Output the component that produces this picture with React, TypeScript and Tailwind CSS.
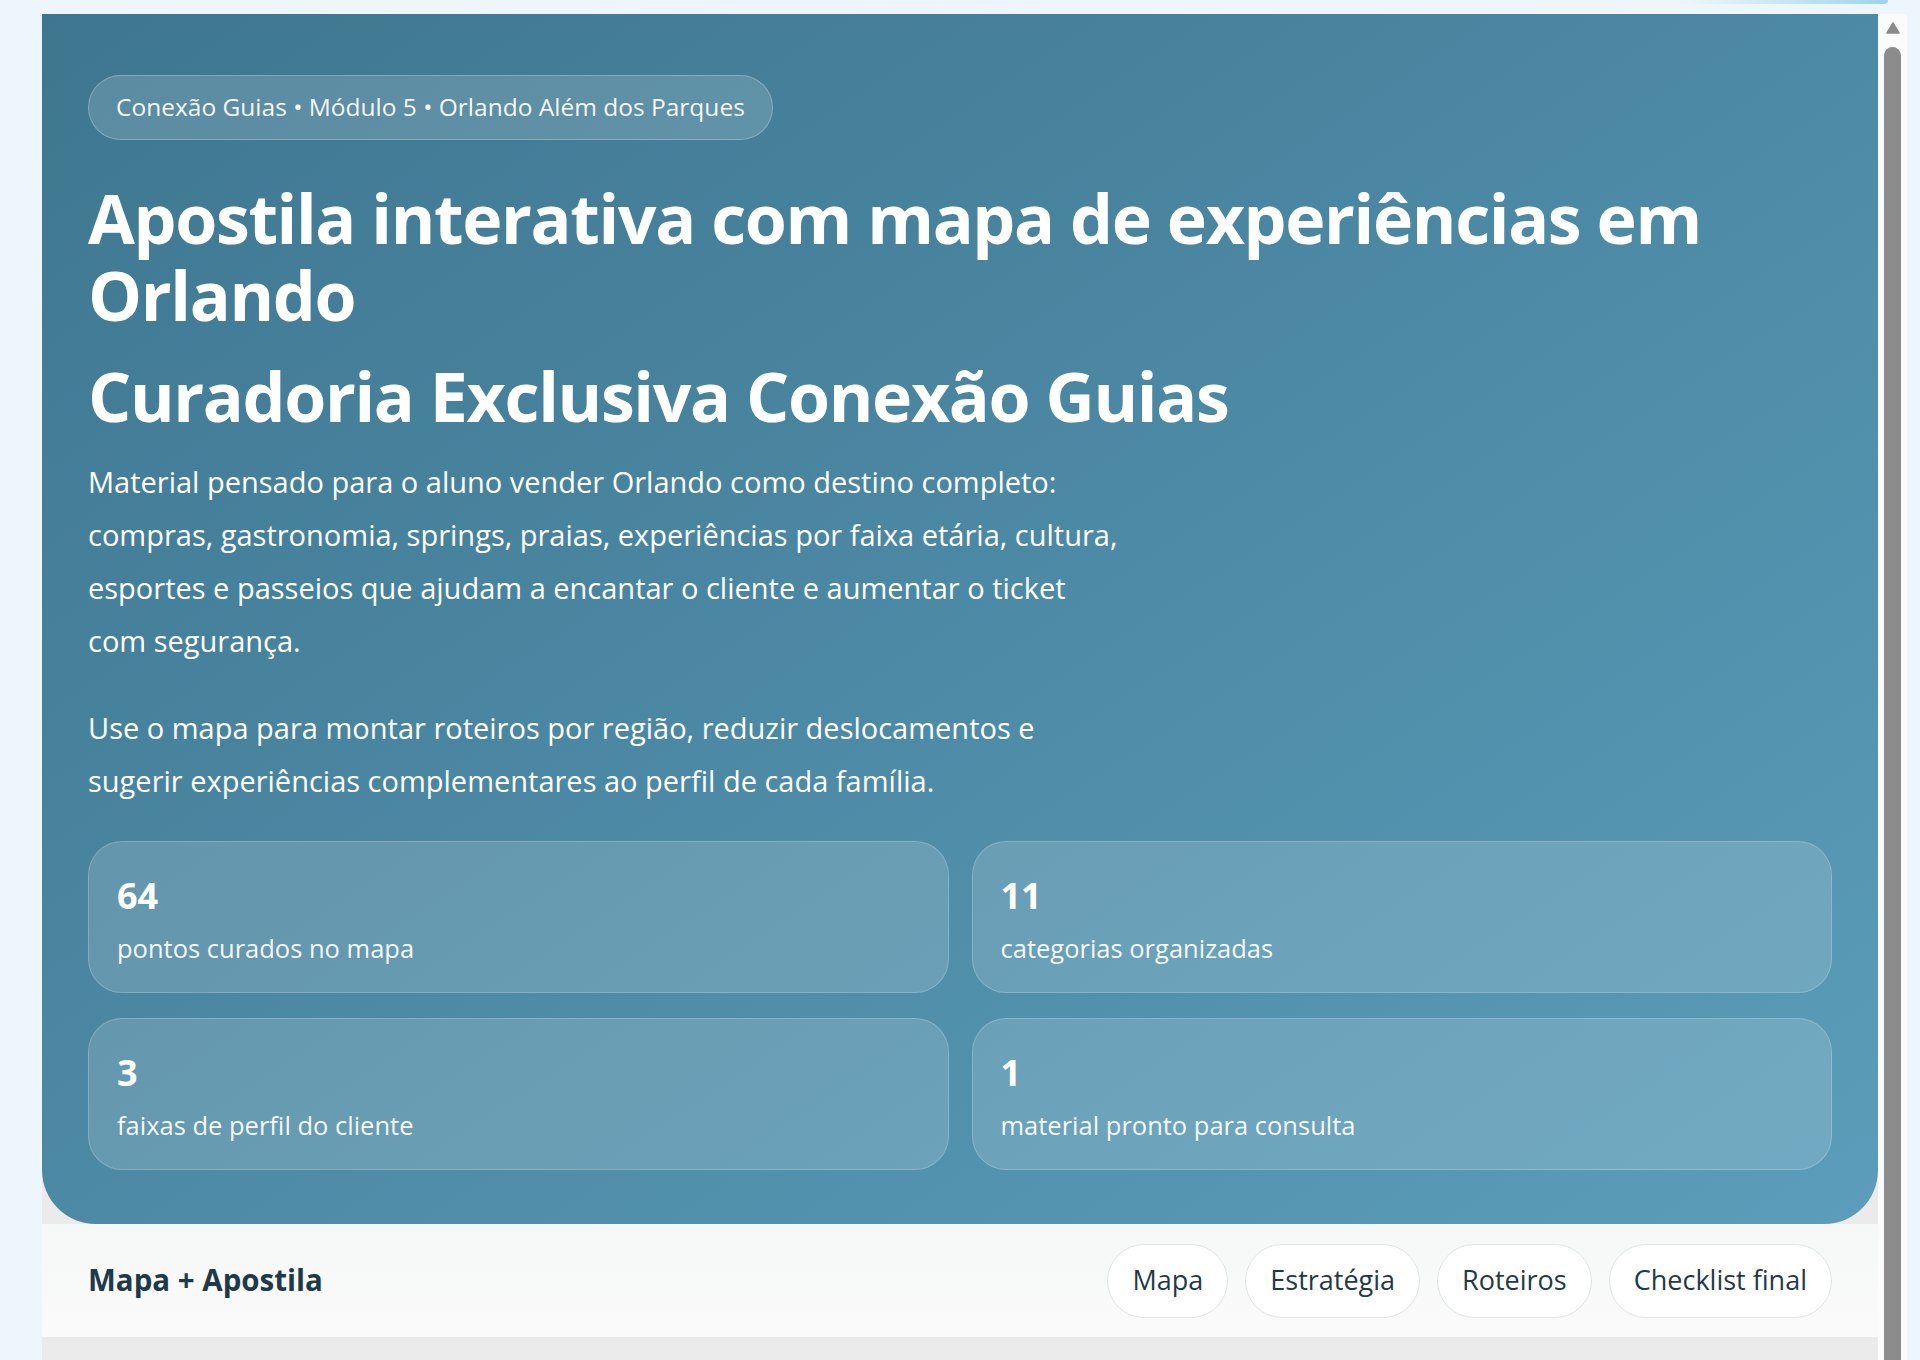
const stats = [
  { value: '64', label: 'pontos curados no mapa' },
  { value: '11', label: 'categorias organizadas' },
  { value: '3', label: 'faixas de perfil do cliente' },
  { value: '1', label: 'material pronto para consulta' },
]

const tabs = ['Mapa', 'Estratégia', 'Roteiros', 'Checklist final']

function Scrollbar() {
  return (
    <div className="w-[29px] shrink-0 bg-[#fbfbfb] flex flex-col items-center pt-[8px]">
      <svg width="14" height="12" viewBox="0 0 14 12" className="shrink-0">
        <path d="M7 1 L13 11 L1 11 Z" fill="#8a8a8a" stroke="#8a8a8a" strokeWidth="1.5" strokeLinejoin="round" />
      </svg>
      <div className="mt-[13px] w-[17px] flex-1 rounded-t-full bg-[#8c8c8c]" />
    </div>
  )
}

export default function App() {
  return (
    <div className="h-[1360px] overflow-hidden bg-[#eef6fd] font-['Open_Sans',sans-serif] flex flex-col">
      <div className="h-[14px] shrink-0 flex justify-end pr-[32px]">
        <div className="w-[200px] h-[4px] rounded-b-full bg-linear-to-r from-[#eef6fd] to-[#9ed3ec]" />
      </div>
      <div className="flex flex-1 min-h-0 pl-[42px] pr-[13px]">
        <div className="flex-1 min-w-0 bg-[#ebebeb] flex flex-col overflow-hidden">
          <section className="shrink-0 rounded-b-[54px] bg-linear-to-br from-[#3e768f] to-[#5b9dba] px-[46px] pt-[61px] pb-[54px] text-white">
            <div className="inline-flex h-[65px] items-center rounded-full border border-white/25 bg-white/15 px-[27px] text-[24.5px] text-white/95">
              Conexão Guias • Módulo 5 • Orlando Além dos Parques
            </div>
            <h1 className="mt-[39px] text-[68px] font-bold leading-[77px] tracking-[-0.02em]">
              Apostila interativa com mapa de experiências em Orlando
            </h1>
            <h2 className="mt-[24px] text-[68px] font-bold leading-[77px] tracking-[-0.02em]">
              Curadoria Exclusiva Conexão Guias
            </h2>
            <p className="mt-[21px] max-w-[1036px] text-[29px] leading-[53px] text-white">
              Material pensado para o aluno vender Orlando como destino completo: compras, gastronomia, springs, praias,
              experiências por faixa etária, cultura, esportes e passeios que ajudam a encantar o cliente e aumentar o
              ticket com segurança.
            </p>
            <p className="mt-[34px] max-w-[1036px] text-[29px] leading-[53px] text-white">
              Use o mapa para montar roteiros por região, reduzir deslocamentos e sugerir experiências complementares ao
              perfil de cada família.
            </p>
            <div className="mt-[34px] grid grid-cols-2 gap-x-[23px] gap-y-[25px]">
              {stats.map((s) => (
                <div
                  key={s.label}
                  className="h-[152px] rounded-[34px] border border-white/20 bg-white/15 px-[28px] pt-[30px]"
                >
                  <div className="text-[36px] font-bold leading-[48px]">{s.value}</div>
                  <div className="mt-[10px] text-[25.5px] leading-[36px] text-white/95">{s.label}</div>
                </div>
              ))}
            </div>
          </section>
          <nav className="shrink-0 h-[113px] bg-linear-to-b from-[#f6f7f7] to-[#fafafa] flex items-center justify-between px-[46px]">
            <div className="text-[29.5px] font-bold text-[#1e3a4a]">Mapa + Apostila</div>
            <div className="flex gap-[17px]">
              {tabs.map((t) => (
                <button
                  key={t}
                  className="h-[74px] rounded-full border border-[#dfe6ea] bg-white px-[24px] text-[27px] text-[#1f3a48]"
                >
                  {t}
                </button>
              ))}
            </div>
          </nav>
          <div className="flex-1 bg-[#ebebeb]" />
        </div>
        <Scrollbar />
      </div>
    </div>
  )
}
